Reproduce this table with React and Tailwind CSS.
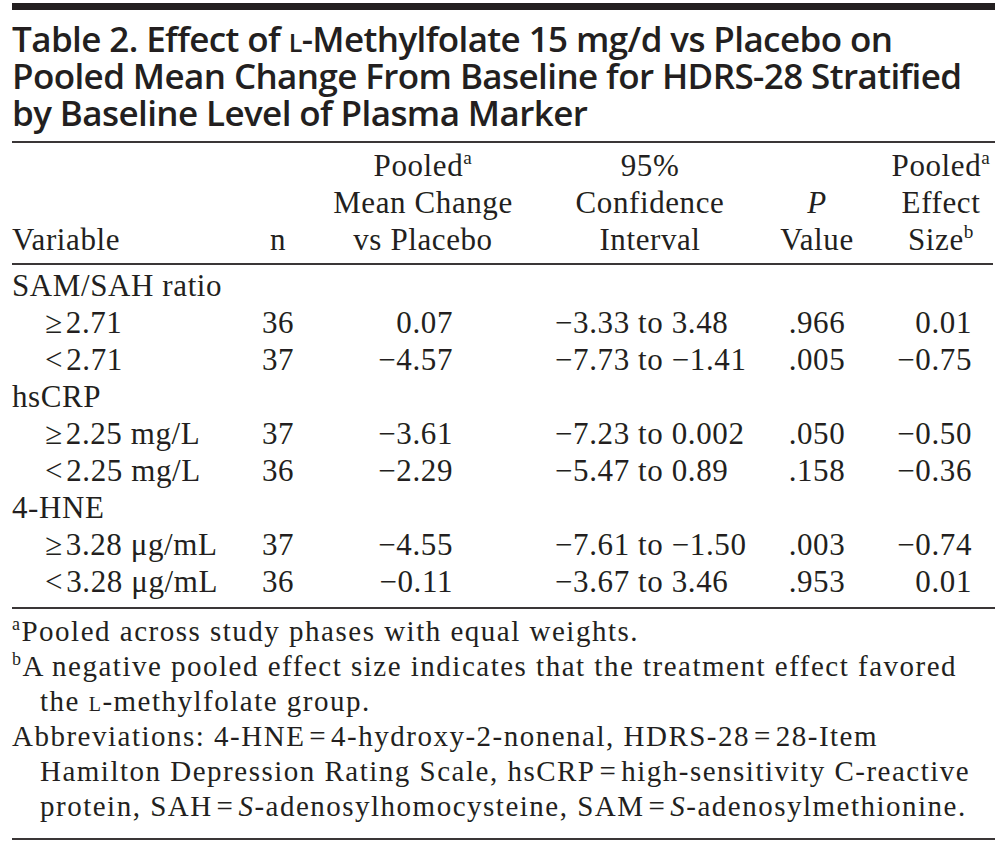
import React from 'react';

const serif = "font-['Liberation_Serif',serif]";
const ink = 'text-[#231f20]';
const cols = 'grid grid-cols-[234px_64px_226px_228px_123px_108px]';

const rows = [
  { label: 'SAM/SAH ratio', group: true },
  { label: '≥\u200a2.71', n: '36', mean: '0.07', ci: '−3.33 to 3.48', p: '.966', es: '0.01' },
  { label: '<\u200a2.71', n: '37', mean: '−4.57', ci: '−7.73 to −1.41', p: '.005', es: '−0.75' },
  { label: 'hsCRP', group: true },
  { label: '≥\u200a2.25 mg/L', n: '37', mean: '−3.61', ci: '−7.23 to 0.002', p: '.050', es: '−0.50' },
  { label: '<\u200a2.25 mg/L', n: '36', mean: '−2.29', ci: '−5.47 to 0.89', p: '.158', es: '−0.36' },
  { label: '4-HNE', group: true },
  { label: '≥\u200a3.28 μg/mL', n: '37', mean: '−4.55', ci: '−7.61 to −1.50', p: '.003', es: '−0.74' },
  { label: '<\u200a3.28 μg/mL', n: '36', mean: '−0.11', ci: '−3.67 to 3.46', p: '.953', es: '0.01' },
];

const Sup = ({ children }) => (
  <sup className="text-[0.62em] top-[-0.62em]">{children}</sup>
);

const Eq = () => <span>{'\u200a=\u200a'}</span>;

const App = () => {
  return (
    <div className={`w-[1007px] h-[843px] bg-white overflow-hidden ${ink}`}>
      <div className="ml-[12px] w-[983px] pt-[3px]">
        <div className="h-[7px] bg-[#231f20]" />

        <h2 className="mt-[10px] font-['Open_Sans',sans-serif] font-semibold text-[35px] leading-[37px] tracking-[-0.6px] whitespace-nowrap">
          Table 2. Effect of <span className="[font-variant:small-caps]">l</span>-Methylfolate 15 mg/d vs Placebo on
          <br />
          Pooled Mean Change From Baseline for HDRS-28 Stratified
          <br />
          by Baseline Level of Plasma Marker
        </h2>

        <div className="mt-[10px] h-[2px] bg-[#3a3637]" />

        <div className={`${serif} text-[31px] leading-[37px] tracking-[0.6px]`}>
          <div className={`${cols} items-end pt-[4px] pb-[5px]`}>
            <div>Variable</div>
            <div className="text-center">n</div>
            <div className="text-center">
              Pooled<Sup>a</Sup>
              <br />
              Mean Change
              <br />
              vs Placebo
            </div>
            <div className="text-center">
              95%
              <br />
              Confidence
              <br />
              Interval
            </div>
            <div className="text-center pr-[17px]">
              <i>P</i>
              <br />
              Value
            </div>
            <div className="text-center">
              Pooled<Sup>a</Sup>
              <br />
              Effect
              <br />
              Size<Sup>b</Sup>
            </div>
          </div>

          <div className="h-[2px] w-[981px] bg-[#3a3637]" />

          <div className="pt-[2px] pb-[7px]">
            {rows.map((r, i) =>
              r.group ? (
                <div key={i}>{r.label}</div>
              ) : (
                <div key={i} className={cols}>
                  <div className="pl-[33px] whitespace-nowrap">{r.label}</div>
                  <div className="text-center">{r.n}</div>
                  <div className="text-right pr-[83px]">{r.mean}</div>
                  <div className="pl-[19px] whitespace-nowrap">{r.ci}</div>
                  <div className="text-center pr-[17px]">{r.p}</div>
                  <div className="text-right pr-[23px]">{r.es}</div>
                </div>
              )
            )}
          </div>
        </div>

        <div className="h-[2px] bg-[#3a3637]" />

        <div className={`${serif} text-[29px] leading-[35px] tracking-[1.5px] whitespace-nowrap pt-[5px]`}>
          <p>
            <Sup>a</Sup>Pooled across study phases with equal weights.
          </p>
          <p>
            <Sup>b</Sup>A negative pooled effect size indicates that the treatment effect favored
          </p>
          <p className="pl-[28px]">
            the <span className="[font-variant:small-caps]">l</span>-methylfolate group.
          </p>
          <p>
            Abbreviations: 4-HNE<Eq />4-hydroxy-2-nonenal, HDRS-28<Eq />28-Item
          </p>
          <p className="pl-[28px]">
            Hamilton Depression Rating Scale, hsCRP<Eq />high-sensitivity C-reactive
          </p>
          <p className="pl-[28px]">
            protein, SAH<Eq /><i>S</i>-adenosylhomocysteine, SAM<Eq /><i>S</i>-adenosylmethionine.
          </p>
        </div>

        <div className="mt-[14px] h-[2px] bg-[#3a3637]" />
      </div>
    </div>
  );
};

export default App;
